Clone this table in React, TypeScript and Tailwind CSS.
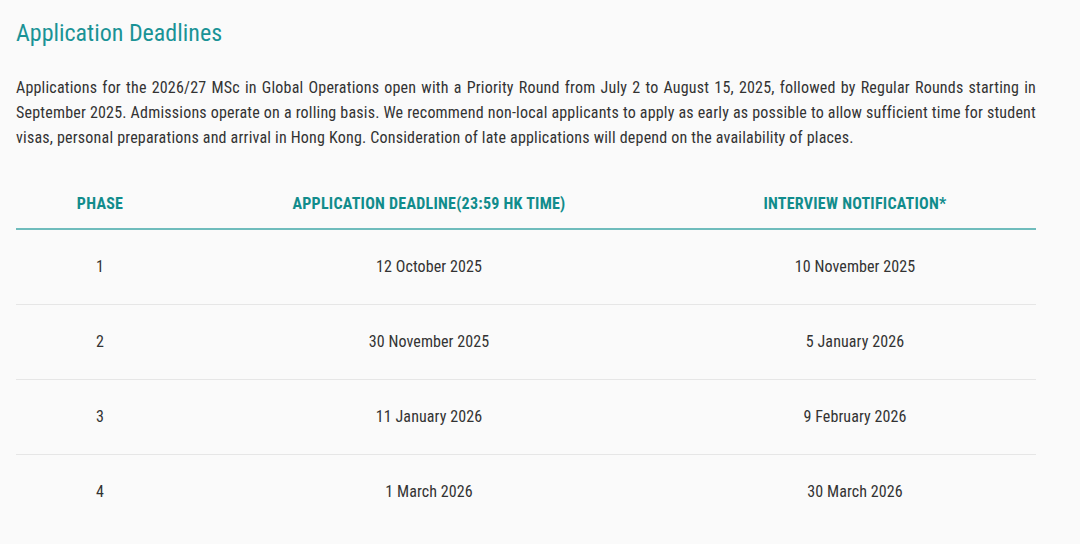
const rows = [
  { phase: "1", deadline: "12 October 2025", interview: "10 November 2025" },
  { phase: "2", deadline: "30 November 2025", interview: "5 January 2026" },
  { phase: "3", deadline: "11 January 2026", interview: "9 February 2026" },
  { phase: "4", deadline: "1 March 2026", interview: "30 March 2026" },
];

export default function App() {
  return (
    <div className="min-h-screen bg-[#fafafa] px-4 pt-[17px] font-['Roboto_Condensed',Roboto,sans-serif] text-[#333]">
      <div className="w-[1020px]">
        <h2 className="text-[24px] leading-8 text-[#1a9396]">Application Deadlines</h2>

        <p className="mt-[26px] text-justify text-[16px] leading-[25px] tracking-[0.2px]">
          Applications for the 2026/27 MSc in Global Operations open with a Priority Round from July 2 to August 15, 2025, followed by Regular Rounds starting in September 2025. Admissions operate on a rolling basis. We recommend non-local applicants to apply as early as possible to allow sufficient time for student visas, personal preparations and arrival in Hong Kong. Consideration of late applications will depend on the availability of places.
        </p>

        <table className="mt-[29px] w-full border-collapse text-center">
          <thead>
            <tr className="border-b-2 border-[#6fbcbc]">
              <th className="h-[50px] w-[168px] text-[16px] font-bold tracking-[0.25px] text-[#118c8c]">PHASE</th>
              <th className="h-[50px] w-[490px] text-[16px] font-bold tracking-[0.25px] text-[#118c8c]">APPLICATION DEADLINE(23:59 HK TIME)</th>
              <th className="h-[50px] text-[16px] font-bold tracking-[0.25px] text-[#118c8c]">INTERVIEW NOTIFICATION*</th>
            </tr>
          </thead>
          <tbody>
            {rows.map((r, i) => (
              <tr key={r.phase} className={i < rows.length - 1 ? "border-b border-[#e6e6e6]" : ""}>
                <td className="h-[75px] text-[16px] tracking-[0.1px]">{r.phase}</td>
                <td className="h-[75px] text-[16px] tracking-[0.1px]">{r.deadline}</td>
                <td className="h-[75px] text-[16px] tracking-[0.1px]">{r.interview}</td>
              </tr>
            ))}
          </tbody>
        </table>
      </div>
    </div>
  );
}
